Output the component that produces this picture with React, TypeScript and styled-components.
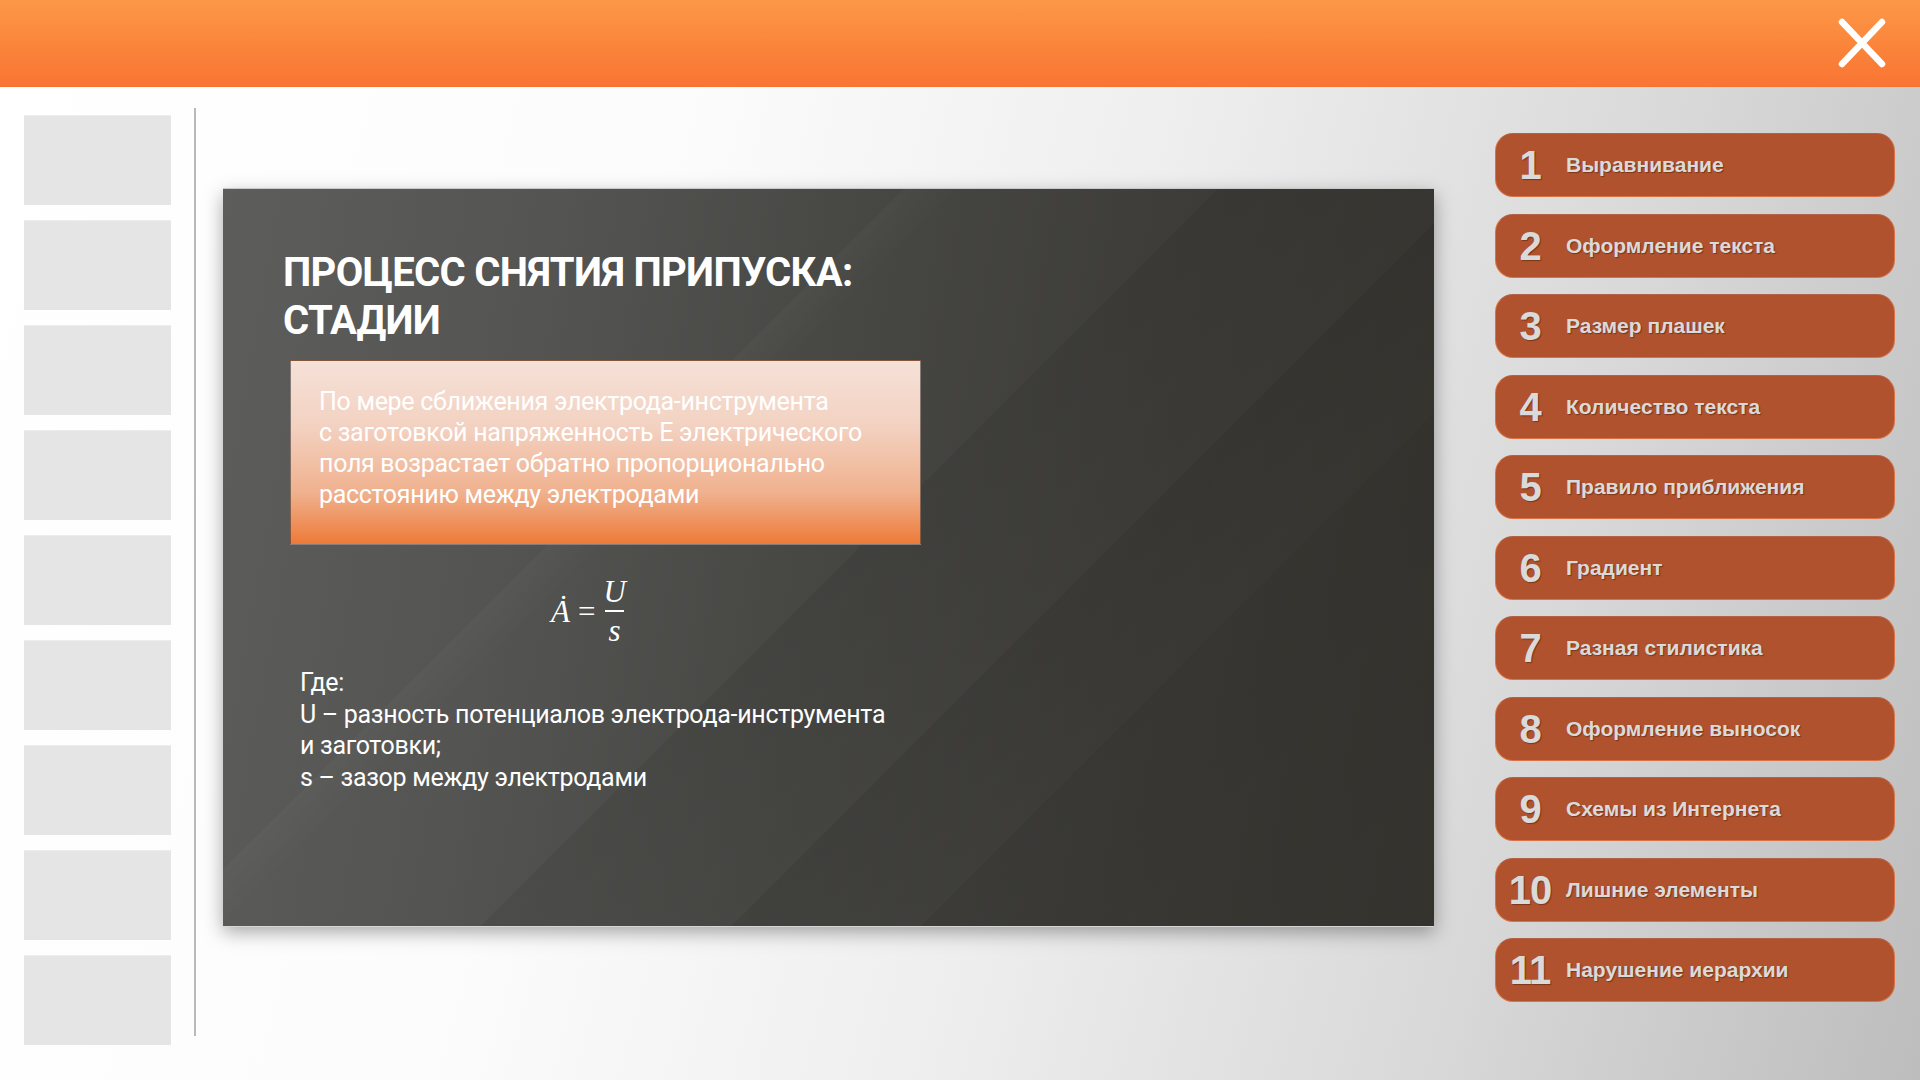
import React from "react";
import styled, { createGlobalStyle } from "styled-components";

const GlobalStyle = createGlobalStyle`
  html, body { margin: 0; padding: 0; }
  body {
    width: 1920px;
    height: 1080px;
    overflow: hidden;
    font-family: "Liberation Sans", Arial, sans-serif;
  }
  * { box-sizing: border-box; }
`;

const Page = styled.div`
  width: 1920px;
  height: 1080px;
  display: flex;
  flex-direction: column;
  background: linear-gradient(105deg, #ffffff 0%, #fcfcfc 32%, #eeeeee 55%, #d8d8d8 78%, #bdbdbd 100%);
`;

const Header = styled.header`
  height: 87px;
  flex: none;
  display: flex;
  align-items: center;
  justify-content: flex-end;
  padding-right: 33px;
  background: linear-gradient(180deg, #fd9848 0%, #fa8239 60%, #f97534 100%);
  border-bottom: 1px solid #f7742f;
`;

const CloseButton = styled.button`
  width: 50px;
  height: 52px;
  padding: 0;
  border: none;
  background: transparent;
  display: flex;
  align-items: center;
  justify-content: center;
  cursor: pointer;
`;

const Main = styled.main`
  flex: 1;
  display: flex;
  align-items: flex-start;
  padding-left: 24px;
`;

const ThumbColumn = styled.div`
  display: flex;
  flex-direction: column;
  gap: 15px;
  margin-top: 28px;
`;

const Thumb = styled.div`
  width: 147px;
  height: 90px;
  background: #e5e5e5;
  border-top: 1px solid #ededed;
`;

const Separator = styled.div`
  width: 2px;
  height: 928px;
  margin-top: 21px;
  margin-left: 23px;
  background: #b9b9b9;
`;

const Slide = styled.section`
  width: 1211px;
  height: 737px;
  margin-top: 102px;
  margin-left: 27px;
  display: flex;
  flex-direction: column;
  align-items: flex-start;
  padding: 60px 0 0 60px;
  font-family: Roboto, "Liberation Sans", sans-serif;
  color: #ffffff;
  box-shadow: 0 -1px 0 #c9c9c9, 0 1px 0 #d6d6d6, 0 6px 18px rgba(0, 0, 0, 0.35);
  background:
    linear-gradient(135deg,
      rgba(255, 255, 255, 0) 0%,
      rgba(255, 255, 255, 0) 34.9%,
      rgba(255, 255, 255, 0.025) 35%,
      rgba(255, 255, 255, 0) 38%,
      rgba(0, 0, 0, 0) 51%,
      rgba(0, 0, 0, 0.07) 51.1%,
      rgba(0, 0, 0, 0.02) 63.9%,
      rgba(0, 0, 0, 0.09) 64%,
      rgba(0, 0, 0, 0.03) 73.6%,
      rgba(0, 0, 0, 0.08) 73.7%,
      rgba(0, 0, 0, 0.03) 100%),
    linear-gradient(100deg, #5d5d5b 0%, #545452 25%, #464643 50%, #3c3b37 75%, #35342f 100%);
`;

const Title = styled.h1`
  margin: 0;
  font-size: 40px;
  line-height: 48px;
  font-weight: 700;
  letter-spacing: -0.7px;
  text-transform: uppercase;
  color: #ffffff;
`;

const Callout = styled.div`
  width: 631px;
  height: 185px;
  margin: 15px 0 0 7px;
  padding: 25px 0 0 28px;
  border: 1px solid rgba(60, 60, 60, 0.6);
  background: linear-gradient(180deg, #f5e1d7 0%, #f3d2c2 35%, #f0b18e 72%, #ed7a38 100%);
  font-size: 25px;
  line-height: 31px;
  font-weight: 400;
  letter-spacing: -0.3px;
  color: #ffffff;
`;

const Line = styled.div`
  white-space: nowrap;
`;

const Formula = styled.div`
  margin: 32px 0 0 268px;
  display: flex;
  align-items: center;
  gap: 8px;
  font-family: "Liberation Serif", "DejaVu Serif", serif;
  font-style: italic;
  font-size: 31px;
  color: #ffffff;
`;

const Upright = styled.span`
  font-style: normal;
`;

const Fraction = styled.span`
  display: inline-flex;
  flex-direction: column;
  align-items: center;
  line-height: 30px;
`;

const FractionBar = styled.span`
  width: 19px;
  height: 2px;
  background: #ffffff;
  margin: 3px 0 4px;
`;

const Explanation = styled.div`
  margin: 21px 0 0 17px;
  font-size: 25px;
  line-height: 31.5px;
  letter-spacing: -0.3px;
  color: #ffffff;
`;

const ButtonColumn = styled.nav`
  display: flex;
  flex-direction: column;
  gap: 16.5px;
  margin-top: 46px;
  margin-left: 61px;
`;

const TopicButton = styled.button`
  width: 400px;
  height: 64px;
  display: flex;
  align-items: center;
  padding: 0 0 0 8px;
  border: 1.5px solid rgba(236, 128, 80, 0.7);
  border-top-color: rgba(180, 110, 90, 0.6);
  border-radius: 18px;
  background: #b0522d;
  cursor: pointer;
  text-align: left;
  color: #dadada;
  text-shadow: 1px 1px 1px rgba(60, 20, 5, 0.45);
`;

const Num = styled.span`
  width: 52px;
  flex: none;
  text-align: center;
  font-family: "Liberation Sans", Arial, sans-serif;
  font-weight: 700;
  font-size: 40px;
  line-height: 1;
  letter-spacing: -1px;
`;

const Label = styled.span`
  margin-left: 10px;
  font-family: "Liberation Sans", Arial, sans-serif;
  font-weight: 700;
  font-size: 21px;
  white-space: nowrap;
`;

const topics = [
  "Выравнивание",
  "Оформление текста",
  "Размер плашек",
  "Количество текста",
  "Правило приближения",
  "Градиент",
  "Разная стилистика",
  "Оформление выносок",
  "Схемы из Интернета",
  "Лишние элементы",
  "Нарушение иерархии",
];

export default function App() {
  return (
    <>
      <GlobalStyle />
      <Page>
        <Header>
          <CloseButton aria-label="Закрыть">
            <svg width="50" height="52" viewBox="0 0 50 52">
              <path
                d="M5 5 L45 47 M45 5 L5 47"
                stroke="#ffffff"
                strokeWidth="6.5"
                strokeLinecap="round"
                fill="none"
              />
            </svg>
          </CloseButton>
        </Header>
        <Main>
          <ThumbColumn>
            {Array.from({ length: 9 }).map((_, i) => (
              <Thumb key={i} />
            ))}
          </ThumbColumn>
          <Separator />
          <Slide>
            <Title>
              Процесс снятия припуска:
              <br />
              стадии
            </Title>
            <Callout>
              <Line>По мере сближения электрода-инструмента</Line>
              <Line>с заготовкой напряженность Е электрического</Line>
              <Line>поля возрастает обратно пропорционально</Line>
              <Line>расстоянию между электродами</Line>
            </Callout>
            <Formula>
              <span>Ȧ</span>
              <Upright>=</Upright>
              <Fraction>
                <span>U</span>
                <FractionBar />
                <span>s</span>
              </Fraction>
            </Formula>
            <Explanation>
              <Line>Где:</Line>
              <Line>U – разность потенциалов электрода-инструмента</Line>
              <Line>и заготовки;</Line>
              <Line>s – зазор между электродами</Line>
            </Explanation>
          </Slide>
          <ButtonColumn>
            {topics.map((t, i) => (
              <TopicButton key={t}>
                <Num>{i + 1}</Num>
                <Label>{t}</Label>
              </TopicButton>
            ))}
          </ButtonColumn>
        </Main>
      </Page>
    </>
  );
}
